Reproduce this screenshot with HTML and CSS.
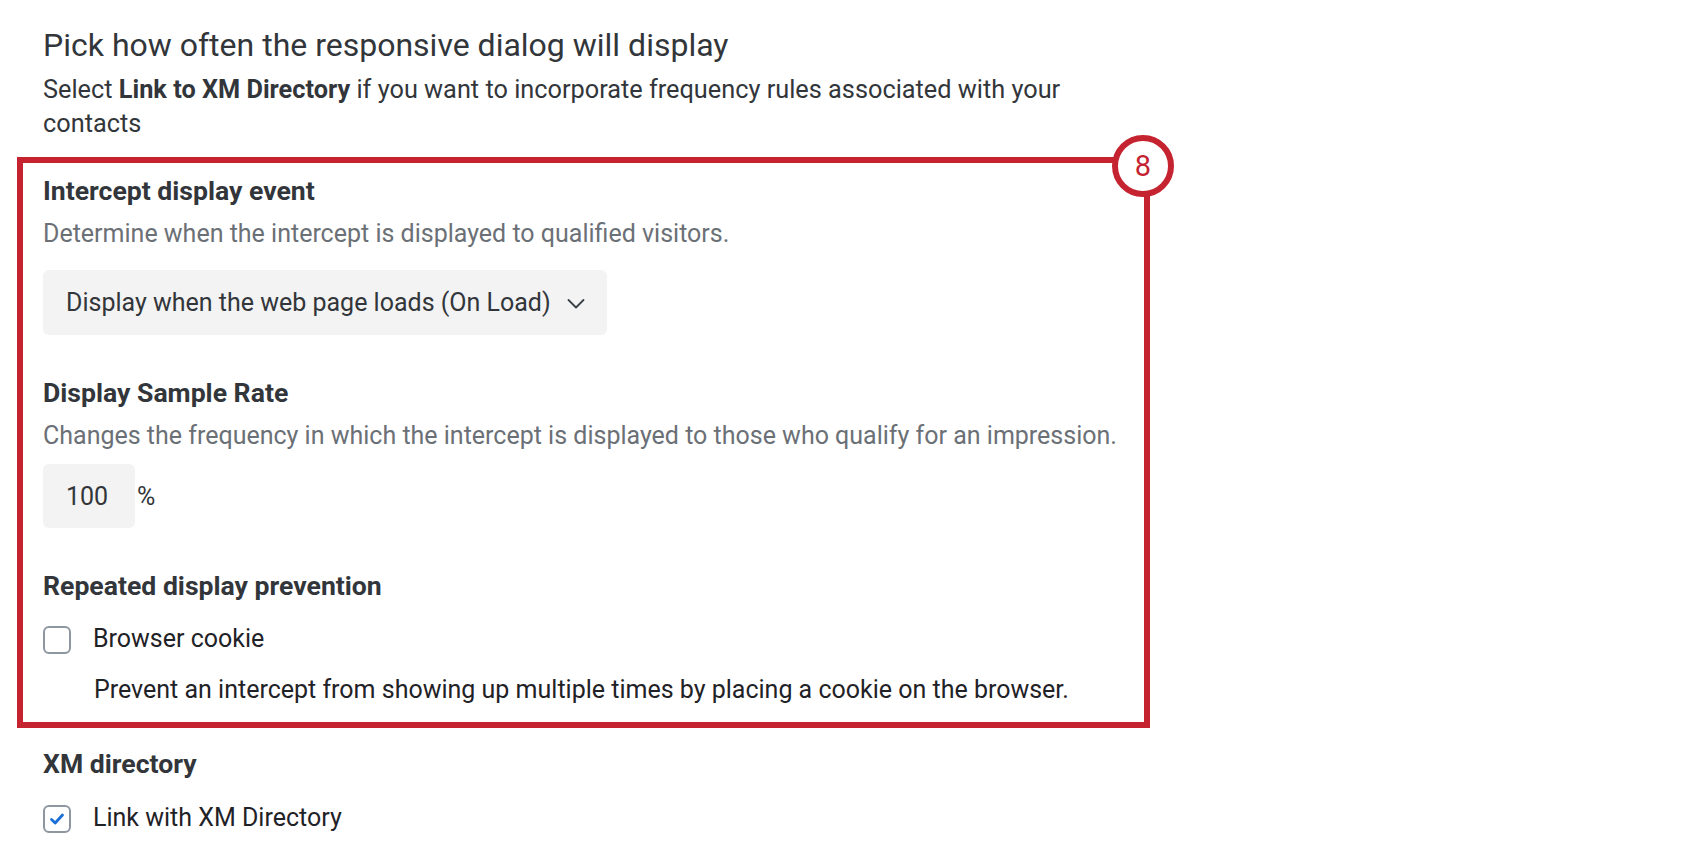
FILE: index.html
```html
<!DOCTYPE html>
<html lang="en">
<head>
<meta charset="utf-8">
<title>Display frequency</title>
<link rel="stylesheet" href="styles.css">
</head>
<body>
<main class="page">
  <h1 class="title">Pick how often the responsive dialog will display</h1>
  <p class="intro">Select <strong>Link to XM Directory</strong> if you want to incorporate frequency rules associated with your contacts</p>

  <section class="highlight">
    <span class="badge">8</span>

    <h2 class="label">Intercept display event</h2>
    <p class="desc">Determine when the intercept is displayed to qualified visitors.</p>
    <div class="select">
      <span>Display when the web page loads (On Load)</span>
      <svg class="chevron" width="20" height="12" viewBox="0 0 20 12"><path d="M2.5 2 L10 9.5 L17.5 2" fill="none" stroke="#3b4045" stroke-width="1.8" stroke-linecap="round" stroke-linejoin="round"/></svg>
    </div>

    <h2 class="label label-gap">Display Sample Rate</h2>
    <p class="desc">Changes the frequency in which the intercept is displayed to those who qualify for an impression.</p>
    <div class="rate">
      <span class="number">100</span>
      <span class="unit">%</span>
    </div>

    <h2 class="label label-gap">Repeated display prevention</h2>
    <label class="check-row">
      <span class="box"></span>
      <span>Browser cookie</span>
    </label>
    <p class="help">Prevent an intercept from showing up multiple times by placing a cookie on the browser.</p>
  </section>

  <h2 class="label xm-label">XM directory</h2>
  <label class="check-row xm-row">
    <span class="box checked">
      <svg width="18" height="16" viewBox="0 0 18 16"><path d="M3.5 8.5 L7.2 12 L14.5 4" fill="none" stroke="#1a6fd6" stroke-width="2.8" stroke-linecap="round" stroke-linejoin="round"/></svg>
    </span>
    <span>Link with XM Directory</span>
  </label>
</main>
</body>
</html>
```
FILE: styles.css
```css
* { box-sizing: border-box; }
html, body { margin: 0; padding: 0; background: #ffffff; }
body {
  font-family: Roboto, "Liberation Sans", sans-serif;
  color: #2f3338;
  font-size: 25px;
}
.page {
  padding: 26px 0 0 43px;
  display: flex;
  flex-direction: column;
  align-items: flex-start;
}
.title {
  margin: 0;
  font-size: 32px;
  line-height: 38px;
  font-weight: 400;
  color: #32363a;
}
.intro {
  margin: 9px 0 0 0;
  max-width: 1075px;
  font-size: 25.3px;
  line-height: 33.5px;
  color: #32363a;
}
.intro strong { font-weight: 700; }

.highlight {
  position: relative;
  margin: 17px 0 0 -26px;
  width: 1133px;
  border: 6px solid #c52330;
  padding: 13px 20px 17px 20px;
  display: flex;
  flex-direction: column;
  align-items: flex-start;
}
.badge {
  position: absolute;
  right: -30px;
  top: -28px;
  width: 62px;
  height: 62px;
  border: 6px solid #c52330;
  border-radius: 50%;
  background: #ffffff;
  color: #c52330;
  font-size: 29px;
  line-height: 50px;
  text-align: center;
}
.label {
  margin: 0;
  font-size: 26.6px;
  line-height: 30px;
  font-weight: 700;
  color: #32363a;
}
.label-gap { margin-top: 43px; }
.desc {
  margin: 13px 0 0 0;
  line-height: 30px;
  color: #6b7076;
}
.select {
  margin-top: 21px;
  height: 65px;
  padding: 0 21px 0 23px;
  background: #f3f3f3;
  border-radius: 6px;
  display: flex;
  align-items: center;
  gap: 15px;
  color: #32363a;
}
.chevron { display: block; margin-top: 2px; }
.rate {
  margin-top: 13px;
  display: flex;
  align-items: center;
}
.number {
  width: 92px;
  height: 64px;
  background: #f3f3f3;
  border-radius: 6px;
  display: flex;
  align-items: center;
  padding-left: 23px;
  color: #32363a;
}
.unit { margin-left: 2px; color: #32363a; }
.check-row {
  margin-top: 22px;
  display: flex;
  align-items: center;
  gap: 22px;
  line-height: 30px;
  color: #1f2226;
}
.box {
  width: 28px;
  height: 28px;
  border: 2px solid #8e96a0;
  border-radius: 6px;
  background: #ffffff;
  display: flex;
  align-items: center;
  justify-content: center;
  flex: none;
  margin-top: 3px;
}
.help {
  margin: 21px 0 0 0;
  padding-left: 51px;
  line-height: 30px;
  color: #1f2226;
}
.xm-label { margin-top: 21px; }
.xm-row { margin-top: 23px; }
```
